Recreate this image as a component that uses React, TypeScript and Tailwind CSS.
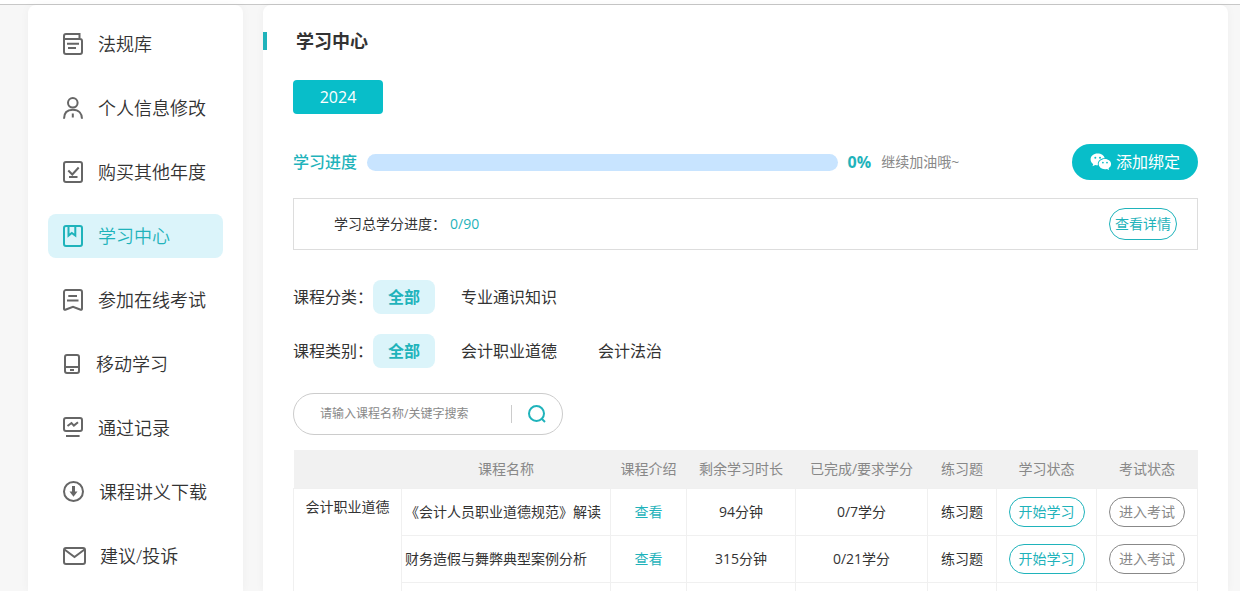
import React, { useState } from 'react';

interface MenuItem {
  label: string;
  width: number;
  icon: React.ReactNode;
}

interface Course {
  name: string;
  duration: string;
  credit: string;
}

const menu: MenuItem[] = [
  {
    label: '法规库',
    width: 22,
    icon: (
      <>
        <path d="M17.500 6V1H4a2 2 0 0 0-2 2v16a2 2 0 0 0 2 2h14a2 2 0 0 0 2-2V8a2 2 0 0 0-2-2H2" />
        <path d="M5 10.700h12M6 15h8" />
      </>
    ),
  },
  {
    label: '个人信息修改',
    width: 22,
    icon: (
      <>
        <circle cx="10.800" cy="5.800" r="4.800" />
        <path d="M2 21.800c0-5 2.600-9 8.800-9s9.200 4 9.200 9M10.800 16.500v4" />
      </>
    ),
  },
  {
    label: '购买其他年度',
    width: 22,
    icon: (
      <>
        <rect x="2" y="1" width="18" height="20" rx="2" />
        <path d="M6.300 9.500l4 4 6.400-7M7 16h8.500" />
      </>
    ),
  },
  {
    label: '学习中心',
    width: 22,
    icon: (
      <>
        <rect x="2" y="1" width="18" height="20" rx="2" />
        <path d="M6.500 1v9.600L9.800 8l3.500 2.600V1" />
      </>
    ),
  },
  {
    label: '参加在线考试',
    width: 22,
    icon: (
      <>
        <path
          d="M4 1h14a2 2 0 0 1 2 2v16.800c0 .8-.6 1.200-1.300.9L11 17.800l-7.700 2.900c-.7.3-1.300-.1-1.300-.9V3a2 2 0 0 1 2-2z"
        />
        <path d="M6.300 7H15M5 11.500h11.500" />
      </>
    ),
  },
  {
    label: '移动学习',
    width: 20,
    icon: (
      <>
        <rect x="3" y="2" width="14" height="18" rx="2" />
        <path d="M3 14h14M8 17h4" />
      </>
    ),
  },
  {
    label: '通过记录',
    width: 22,
    icon: (
      <>
        <rect x="2" y="1" width="18" height="13" rx="2" />
        <path d="M5.500 9l4-3 2.400 2.600L16 5.200M4 19h13.600" />
      </>
    ),
  },
  {
    label: '课程讲义下载',
    width: 23,
    icon: (
      <>
        <circle cx="11.500" cy="10.500" r="9.500" />
        <path d="M11.500 5v8" strokeWidth="3" />
        <path d="M7.500 10.500h8L11.500 15.800z" fill="currentColor" stroke="none" />
      </>
    ),
  },
  {
    label: '建议/投诉',
    width: 24,
    icon: (
      <>
        <rect x="2" y="3" width="21" height="16" rx="2" />
        <path d="M2.500 4.500l10 7.500 10-7.500" />
      </>
    ),
  },
];

const filters = [
  { label: '课程分类：', options: ['全部', '专业通识知识'] },
  { label: '课程类别：', options: ['全部', '会计职业道德', '会计法治'] },
];

const columns = ['', '课程名称', '课程介绍', '剩余学习时长', '已完成/要求学分', '练习题', '学习状态', '考试状态'];

const courses: Course[] = [
  { name: '《会计人员职业道德规范》解读', duration: '94分钟', credit: '0/7学分' },
  { name: '财务造假与舞弊典型案例分析', duration: '315分钟', credit: '0/21学分' },
];

const WechatIcon = () => (
  <svg width="22" height="18" viewBox="0 0 22 18" aria-hidden="true">
    <path
      fill="#fff"
      d="M7.600.5C3.600.5.600 3.100.600 6.400c0 1.900 1 3.500 2.600 4.600l-.7 2.300 2.700-1.300c.8.2 1.600.3 2.400.3h.4c-.1-.4-.2-.9-.2-1.400 0-3.200 2.900-5.700 6.500-5.700h.4C14.100 2.500 11.200.5 7.600.5z"
    />
    <path
      fill="#fff"
      d="M14.900 5.900c-3.500 0-6.200 2.300-6.200 5.100s2.700 5.200 6.200 5.200c.7 0 1.400-.1 2-.3l2.200 1.200-.5-1.900c1.500-1 2.500-2.400 2.500-4.200 0-2.800-2.700-5.100-6.200-5.100z"
    />
    <g fill="#08bec9">
      <circle cx="5.300" cy="4.800" r="1" />
      <circle cx="10" cy="4.800" r="1" />
      <circle cx="12.900" cy="9.600" r=".9" />
      <circle cx="17" cy="9.600" r=".9" />
    </g>
  </svg>
);

const Sidebar = () => (
  <nav className="w-[215px] shrink-0 rounded-t-lg bg-white px-5 pt-[17px] font-[350] shadow-[0_0_10px_rgba(0,0,0,0.04)]">
    <ul className="flex flex-col gap-5">
      {menu.map((item) => (
        <li key={item.label}>
          <a
            href="#"
            className={`flex h-11 items-center gap-3.5 rounded-lg pl-3.5 text-lg ${
              item.label === '学习中心' ? 'bg-[#dbf4fa] text-[#1fb3bb]' : 'text-[#333]'
            }`}
          >
            <svg
              width={item.width}
              height="22"
              viewBox={`0 0 ${item.width} 22`}
              fill="none"
              stroke="currentColor"
              strokeWidth="2"
              aria-hidden="true"
              className={item.label === '学习中心' ? 'text-[#1fb3bb]' : 'text-[#666]'}
            >
              {item.icon}
            </svg>
            <span>{item.label}</span>
          </a>
        </li>
      ))}
    </ul>
  </nav>
);

const CourseTable = () => (
  <table className="mt-[15px] w-full table-fixed border-collapse text-center text-sm text-[#333]">
    <colgroup>
      <col className="w-[108px]" />
      <col />
      <col className="w-[76px]" />
      <col className="w-[109px]" />
      <col className="w-[132px]" />
      <col className="w-[69px]" />
      <col className="w-[100px]" />
      <col className="w-[101px]" />
    </colgroup>
    <thead>
      <tr className="h-[38px] bg-[#f1f1f1] text-[#888]">
        {columns.map((col) => (
          <th key={col} scope="col" className="p-0 font-normal">{col}</th>
        ))}
      </tr>
    </thead>
    <tbody>
      {courses.map((course, i) => (
        <tr key={course.name} className="h-[47px]">
          {i === 0 && (
            <th scope="rowgroup" rowSpan={3} className="border border-[#f0f0f0] p-0 pt-2 align-top font-normal">
              会计职业道德
            </th>
          )}
          <td className="border border-[#f0f0f0] p-0 pl-[3px] text-left whitespace-nowrap">{course.name}</td>
          <td className="border border-[#f0f0f0] p-0">
            <a href="#" className="text-[#1fb3bb]">查看</a>
          </td>
          <td className="border border-[#f0f0f0] p-0">{course.duration}</td>
          <td className="border border-[#f0f0f0] p-0">{course.credit}</td>
          <td className="border border-[#f0f0f0] p-0">练习题</td>
          <td className="border border-[#f0f0f0] p-0">
            <button type="button" className="h-[30px] w-[76px] rounded-full border border-[#1fb3bb] align-middle text-[#1fb3bb]">
              开始学习
            </button>
          </td>
          <td className="border border-[#f0f0f0] p-0">
            <button type="button" className="h-[30px] w-[76px] rounded-full border border-[#888] align-middle text-[#888]">
              进入考试
            </button>
          </td>
        </tr>
      ))}
      <tr className="h-[47px]">
        {columns.slice(1).map((col) => (
          <td key={col} className="border border-[#f0f0f0] p-0"></td>
        ))}
      </tr>
    </tbody>
  </table>
);

const App: React.FC = () => {
  const [keyword, setKeyword] = useState('');
  const [selected, setSelected] = useState(['全部', '全部']);

  return (
    <div className="flex h-screen flex-col overflow-hidden bg-[#f7f7f7] font-['Open_Sans','Noto_Sans_CJK_SC',sans-serif] font-normal text-[#333]">
      <header className="h-[5px] shrink-0 border-b border-[#c8c8c8] bg-white" />
      <div className="flex min-h-0 flex-1 gap-5 pr-3 pl-7">
        <Sidebar />
        <main className="min-w-0 flex-1 rounded-t-lg bg-white shadow-[0_0_10px_rgba(0,0,0,0.04)]">
          <div className="flex items-center gap-[29px] pt-[22px]">
            <span className="h-[18px] w-1 bg-[#1fb3bb]" />
            <h1 className="text-lg font-bold">学习中心</h1>
          </div>

          <div className="px-[30px] pt-[25px]">
            <button type="button" className="block h-[34px] w-[90px] rounded bg-[#08bec9] text-base text-white">
              2024
            </button>

            <div className="mt-[30px] flex h-9 items-center">
              <span className="text-base font-medium text-[#1fb3bb]">学习进度</span>
              <div role="progressbar" aria-label="学习进度" aria-valuenow={0} className="ml-2.5 h-[17px] w-[52%] rounded-full bg-[#c8e4ff]" />
              <span className="ml-2.5 text-base font-bold text-[#1fb3bb]">0%</span>
              <span className="ml-2.5 text-sm text-[#888]">继续加油哦~</span>
              <button type="button" className="ml-auto flex h-9 w-[126px] items-center justify-center gap-1 rounded-full bg-[#08bec9] text-base text-white">
                <WechatIcon />
                添加绑定
              </button>
            </div>

            <div className="mt-[18px] flex h-[52px] items-center border border-[#ddd] pr-5 pl-10 text-sm">
              <span>学习总学分进度：</span>
              <span className="ml-1 text-[#1fb3bb]">0/90</span>
              <button type="button" className="ml-auto h-8 w-[68px] rounded-full border border-[#1fb3bb] text-[#1fb3bb]">
                查看详情
              </button>
            </div>

            <div className="mt-[30px] flex flex-col gap-5">
              {filters.map((filter, row) => (
                <div key={filter.label} className="flex h-[34px] items-center text-base">
                  <span className="w-20">{filter.label}</span>
                  <div className="flex h-full gap-[11px]">
                    {filter.options.map((option) => (
                      <button
                        key={option}
                        type="button"
                        onClick={() => setSelected((prev) => prev.map((v, i) => (i === row ? option : v)))}
                        className={`rounded-lg px-[15px] ${
                          selected[row] === option ? 'bg-[#dbf4fa] font-bold text-[#1fb3bb]' : ''
                        }`}
                      >
                        {option}
                      </button>
                    ))}
                  </div>
                </div>
              ))}
            </div>

            <form
              onSubmit={(e) => e.preventDefault()}
              className="mt-[25px] flex h-[42px] w-[270px] items-center rounded-full border border-[#ccc] pr-[15px] pl-[26px]"
            >
              <input
                type="text"
                aria-label="搜索课程"
                value={keyword}
                onChange={(e) => setKeyword(e.target.value)}
                placeholder="请输入课程名称/关键字搜索"
                className="min-w-0 flex-1 text-xs outline-none placeholder:text-[#888]"
              />
              <span className="h-[18px] w-px bg-[#ccc]" />
              <button type="submit" aria-label="搜索" className="ml-[15px] flex w-5 justify-center">
                <svg width="20" height="20" viewBox="0 0 20 20" fill="none" stroke="#1fb3bb" strokeWidth="2" aria-hidden="true">
                  <circle cx="9.500" cy="9.500" r="7.500" />
                  <path d="M14.500 14.500l3.500 3.500" />
                </svg>
              </button>
            </form>

            <CourseTable />
          </div>
        </main>
      </div>
    </div>
  );
};

export default App;
